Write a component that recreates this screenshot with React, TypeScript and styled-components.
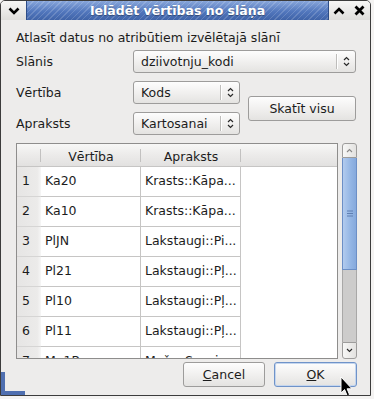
import React from "react";
import styled, { createGlobalStyle } from "styled-components";

const GlobalStyle = createGlobalStyle`
  html, body { margin: 0; padding: 0; background: #f4f3f2; }
  body {
    font-family: "DejaVu Sans", "Liberation Sans", sans-serif;
    font-size: 12.5px;
    color: #1c1c1c;
  }
`;

const Window = styled.div`
  position: relative;
  box-sizing: border-box;
  width: 371px;
  height: 396px;
  border: 1px solid #3c3c3c;
  border-radius: 5px 5px 0 0;
  display: flex;
  flex-direction: column;
  background: #edeceb;
  overflow: hidden;
  /* resize grip highlight in the bottom-left corner */
  &::after {
    content: "";
    position: absolute;
    left: 0;
    bottom: 0;
    width: 20px;
    height: 19px;
    border-left: 4px solid #4f6fb0;
    border-bottom: 4px solid #4f6fb0;
  }
`;

const TitleBar = styled.div`
  display: flex;
  height: 19px;
  flex-shrink: 0;
`;

const FrameButton = styled.div<{ $w: number }>`
  width: ${(p) => p.$w}px;
  display: flex;
  align-items: center;
  justify-content: center;
  background: linear-gradient(#f6f6f5, #dedddb);
`;

const Title = styled.div`
  flex: 1;
  display: flex;
  align-items: center;
  justify-content: center;
  color: #fff;
  font-weight: bold;
  font-size: 12.5px;
  text-shadow: 0 1px 1px rgba(0, 0, 0, 0.35);
  background:
    repeating-linear-gradient(135deg, rgba(255,255,255,0.16) 0 1px, transparent 1px 4px),
    linear-gradient(#88a6db, #5277bd 55%, #3f63a8);
  border-left: 1px solid #2d4c87;
  border-right: 1px solid #2d4c87;
`;

const Body = styled.div`
  flex: 1;
  display: flex;
  flex-direction: column;
  padding: 10px 13px 7px 15px;
`;

const Intro = styled.div`
  line-height: 16px;
  height: 16px;
`;

const Form = styled.div`
  margin-top: 4px;
  display: grid;
  grid-template-columns: 117px 107px 116px;
  grid-template-rows: 23px 23px 23px;
  row-gap: 8px;
  align-items: center;
`;

const Label = styled.div<{ $row: number }>`
  grid-column: 1;
  grid-row: ${(p) => p.$row};
`;

const ComboBox = styled.div<{ $row: number; $wide?: boolean }>`
  grid-row: ${(p) => p.$row};
  grid-column: ${(p) => (p.$wide ? "2 / 4" : "2")};
  height: 23px;
  box-sizing: border-box;
  border: 1px solid #9d9c9b;
  border-radius: 3px;
  background: linear-gradient(#fdfdfd, #f1f0ef 50%, #e4e3e1);
  display: flex;
  align-items: center;
`;

const ComboValue = styled.div`
  flex: 1;
  padding-left: 7px;
  white-space: nowrap;
  overflow: hidden;
`;

const ComboSep = styled.div`
  width: 1px;
  height: 15px;
  background: #bebdbb;
  box-shadow: 1px 0 0 #fff;
`;

const ComboArrow = styled.div`
  width: 18px;
  display: flex;
  justify-content: center;
`;

const PushButton = styled.div<{ $w: number; $default?: boolean }>`
  width: ${(p) => p.$w}px;
  height: 25px;
  box-sizing: border-box;
  border: 1px solid ${(p) => (p.$default ? "#6f93c9" : "#9d9c9b")};
  box-shadow: ${(p) => (p.$default ? "inset 0 0 0 1px #c5d6ee" : "none")};
  border-radius: 3px;
  background: linear-gradient(#fdfdfd, #f1f0ef 50%, #e4e3e1);
  display: flex;
  align-items: center;
  justify-content: center;
`;

const ViewAll = styled(PushButton)`
  grid-column: 3;
  grid-row: 2 / 4;
  justify-self: end;
`;

const TableArea = styled.div`
  margin-top: 8px;
  height: 216px;
  display: flex;
  gap: 4px;
`;

const TableFrame = styled.div`
  flex: 1;
  box-sizing: border-box;
  border: 1px solid #8e8d8c;
  background: #fff;
  overflow: hidden;
  display: grid;
  grid-template-columns: 24px 100px 100px 1fr;
  grid-auto-rows: 30px;
  grid-template-rows: 23px;
`;

const HeadCell = styled.div<{ $sep?: boolean }>`
  position: relative;
  box-sizing: border-box;
  border-bottom: 1px solid #c6c5c4;
  background: linear-gradient(#f7f7f6, #ecebea 50%, #e2e1e0);
  display: flex;
  align-items: center;
  justify-content: center;
  padding-top: 2px;
  &::after {
    content: "";
    display: ${(p) => (p.$sep ? "block" : "none")};
    position: absolute;
    right: 0;
    top: 5px;
    bottom: 4px;
    width: 1px;
    background: #c2c1c0;
  }
`;

const RowHead = styled.div`
  box-sizing: border-box;
  border-bottom: 1px solid #d6d5d4;
  background: linear-gradient(90deg, #e6e5e4, #ecebea 85%, #f6f6f6);
  padding: 6px 0 0 5px;
`;

const Cell = styled.div`
  box-sizing: border-box;
  border-right: 1px solid #c6c5c4;
  border-bottom: 1px solid #c6c5c4;
  padding: 6px 0 0 4px;
  white-space: nowrap;
  overflow: hidden;
`;

const Blank = styled.div``;

const ScrollBar = styled.div`
  width: 15px;
  display: flex;
  flex-direction: column;
`;

const ScrollStep = styled.div<{ $up?: boolean }>`
  height: ${(p) => (p.$up ? 15 : 17)}px;
  box-sizing: border-box;
  border: 1px solid #9d9c9b;
  border-radius: ${(p) => (p.$up ? "3px 3px 0 0" : "0 0 3px 3px")};
  background: linear-gradient(90deg, #f7f7f6, #e3e2e0);
  display: flex;
  align-items: center;
  justify-content: center;
`;

const Thumb = styled.div`
  height: 112px;
  box-sizing: border-box;
  border: 1px solid #6c8fc6;
  border-top: none;
  background: linear-gradient(90deg, #b2cbee, #93b5e4 60%, #86a9dc);
  display: flex;
  align-items: center;
  justify-content: center;
`;

const Trough = styled.div`
  flex: 1;
  border-left: 1px solid #a9a8a7;
  border-right: 1px solid #a9a8a7;
  background: #cdcccb;
`;

const ButtonRow = styled.div`
  margin-top: 3px;
  display: flex;
  justify-content: flex-end;
  gap: 9px;
`;

const Cursor = styled.svg`
  position: absolute;
  left: 339px;
  top: 375px;
`;

const UpDown = () => (
  <svg width="7" height="11" viewBox="0 0 7 11">
    <path d="M1 4 L3.5 1.5 L6 4 M1 7 L3.5 9.5 L6 7" fill="none" stroke="#2a2a2a" strokeWidth="1.2" />
  </svg>
);

const rows = [
  ["1", "Ka20", "Krasts::Kāpa..."],
  ["2", "Ka10", "Krasts::Kāpa..."],
  ["3", "PlJN", "Lakstaugi::Pi..."],
  ["4", "Pl21", "Lakstaugi::Pļ..."],
  ["5", "Pl10", "Lakstaugi::Pļ..."],
  ["6", "Pl11", "Lakstaugi::Pļ..."],
  ["7", "Ma1B", "Mežs::Sausi..."],
];

export default function App() {
  return (
    <>
      <GlobalStyle />
      <Window>
        <TitleBar>
          <FrameButton $w={25}>
            <svg width="12" height="8" viewBox="0 0 12 8">
              <path d="M1.5 1.5 L6 6 L10.5 1.5" fill="none" stroke="#000" strokeWidth="2.6" />
            </svg>
          </FrameButton>
          <Title>Ielādēt vērtības no slāņa</Title>
          <FrameButton $w={20}>
            <svg width="12" height="8" viewBox="0 0 12 8">
              <path d="M1.5 6.5 L6 2 L10.5 6.5" fill="none" stroke="#000" strokeWidth="2.6" />
            </svg>
          </FrameButton>
          <FrameButton $w={21}>
            <svg width="11" height="11" viewBox="0 0 11 11">
              <path d="M1.5 1.5 L9.5 9.5 M9.5 1.5 L1.5 9.5" fill="none" stroke="#000" strokeWidth="2.8" />
            </svg>
          </FrameButton>
        </TitleBar>
        <Body>
          <Intro>Atlasīt datus no atribūtiem izvēlētajā slānī</Intro>
          <Form>
            <Label $row={1}>Slānis</Label>
            <ComboBox $row={1} $wide>
              <ComboValue>dziivotnju_kodi</ComboValue>
              <ComboSep />
              <ComboArrow><UpDown /></ComboArrow>
            </ComboBox>
            <Label $row={2}>Vērtība</Label>
            <ComboBox $row={2}>
              <ComboValue>Kods</ComboValue>
              <ComboSep />
              <ComboArrow><UpDown /></ComboArrow>
            </ComboBox>
            <ViewAll $w={108}>Skatīt visu</ViewAll>
            <Label $row={3}>Apraksts</Label>
            <ComboBox $row={3}>
              <ComboValue>Kartosanai</ComboValue>
              <ComboSep />
              <ComboArrow><UpDown /></ComboArrow>
            </ComboBox>
          </Form>
          <TableArea>
            <TableFrame>
              <HeadCell $sep />
              <HeadCell $sep>Vērtība</HeadCell>
              <HeadCell $sep>Apraksts</HeadCell>
              <HeadCell />
              {rows.map(([n, v, d]) => (
                <React.Fragment key={n}>
                  <RowHead>{n}</RowHead>
                  <Cell>{v}</Cell>
                  <Cell>{d}</Cell>
                  <Blank />
                </React.Fragment>
              ))}
            </TableFrame>
            <ScrollBar>
              <ScrollStep $up>
                <svg width="7" height="5" viewBox="0 0 7 5">
                  <path d="M1 4 L3.5 1.5 L6 4" fill="none" stroke="#8a8988" strokeWidth="1.1" />
                </svg>
              </ScrollStep>
              <Thumb>
                <svg width="6" height="7" viewBox="0 0 6 7">
                  <path d="M0 1 H6 M0 3.5 H6 M0 6 H6" stroke="#5f7fb2" strokeWidth="1" />
                </svg>
              </Thumb>
              <Trough />
              <ScrollStep>
                <svg width="7" height="5" viewBox="0 0 7 5">
                  <path d="M1 1 L3.5 3.5 L6 1" fill="none" stroke="#2a2a2a" strokeWidth="1.1" />
                </svg>
              </ScrollStep>
            </ScrollBar>
          </TableArea>
          <ButtonRow>
            <PushButton $w={82}><span><u>C</u>ancel</span></PushButton>
            <PushButton $w={83} $default><span><u>O</u>K</span></PushButton>
          </ButtonRow>
        </Body>
        <Cursor width="14" height="22" viewBox="0 0 14 22">
          <path d="M1 1 L1 17 L4.6 13.6 L7.2 19.8 L9.6 18.8 L7.1 12.8 L12 12.8 Z" fill="#000" stroke="#fff" strokeWidth="1" />
        </Cursor>
      </Window>
    </>
  );
}
